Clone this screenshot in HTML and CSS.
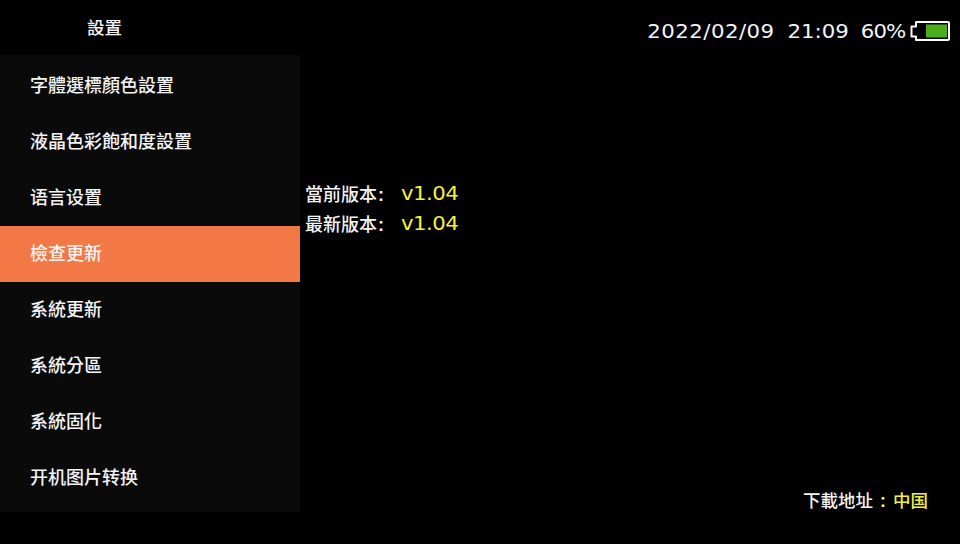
FILE: index.html
```html
<!DOCTYPE html>
<html lang="zh-Hant">
<head>
    <meta charset="UTF-8">
    <meta name="viewport" content="width=device-width, initial-scale=1.0">
    <title>設置</title>
    <link rel="stylesheet" href="styles.css">
</head>
<body>
    <div class="screen">
        <aside class="side">
            <h1 class="side-title">設置</h1>
            <ul class="menu">
                <li class="menu-item">字體選標顏色設置</li>
                <li class="menu-item">液晶色彩飽和度設置</li>
                <li class="menu-item" lang="zh-Hans">语言设置</li>
                <li class="menu-item active">檢查更新</li>
                <li class="menu-item">系統更新</li>
                <li class="menu-item">系統分區</li>
                <li class="menu-item">系統固化</li>
                <li class="menu-item" lang="zh-Hans">开机图片转换</li>
            </ul>
        </aside>

        <main class="content">
            <div class="status">
                <div class="status-text">
                    <span class="status-date">2022/02/09</span>
                    <span class="status-time">21:09</span>
                    <span class="status-pct">60%</span>
                </div>
                <svg class="battery" width="40" height="21" viewBox="0 0 40 21">
                    <path d="M6 1H38a1 1 0 0 1 1 1V18a1 1 0 0 1-1 1H6V15.5H1.5V5.5H6Z" fill="none" stroke="#fff" stroke-width="2" stroke-linejoin="round"/>
                    <rect x="16" y="3.5" width="21" height="13" fill="#4cae1c"/>
                </svg>
            </div>

            <div class="version">
                <div class="version-row"><span class="version-label">當前版本<span class="colon">:</span></span><span class="version-num">v1.04</span></div>
                <div class="version-row"><span class="version-label">最新版本<span class="colon">:</span></span><span class="version-num">v1.04</span></div>
            </div>

            <div class="download">下載地址<span class="download-colon">:</span><span class="download-place">中国</span></div>
        </main>
    </div>
</body>
</html>
```

FILE: styles.css
```css
/* General */
body {
    margin: 0;
    background-color: #000;
    color: #f4f4f4;
    font-family: "Liberation Sans", "Noto Sans CJK TC", sans-serif;
}

.screen {
    display: flex;
    width: 960px;
    height: 544px;
    overflow: hidden;
}

/* Sidebar */
.side {
    width: 300px;
    flex-shrink: 0;
}

.side-title {
    height: 55px;
    margin: 0;
    padding-left: 87px;
    font-size: 17.5px;
    font-weight: 500;
    line-height: 57px;
}

.menu {
    margin: 0;
    padding: 3px 0 6px;
    list-style: none;
    background-color: #0a0a0a;
}

.menu-item {
    height: 56px;
    padding-left: 30px;
    font-size: 18px;
    font-weight: 500;
    line-height: 57px;
}

.menu-item.active {
    background-color: #f27845;
}

/* Right part */
.content {
    flex: 1;
    display: flex;
    flex-direction: column;
}

.status {
    display: flex;
    justify-content: flex-end;
    align-items: center;
    height: 21px;
    margin-top: 21px;
    padding-right: 10px;
}

/* the clock font on the device is wider than anything installed */
.status-text {
    display: flex;
    gap: 11.6px;
    margin-right: 5px;
    margin-bottom: 2px;
    font-family: "DejaVu Sans", sans-serif;
    font-size: 19px;
    transform: scaleX(1.12);
    transform-origin: right center;
}

.status-date {
    letter-spacing: 0.4px;
}

.status-pct {
    margin-left: -0.9px;
    letter-spacing: -0.8px;
}

.version {
    margin-top: 136px;
    padding-left: 5px;
}

.version-row {
    display: flex;
    align-items: center;
    height: 30px;
}

.version-label {
    width: 96px;
    font-size: 18px;
    font-weight: 500;
}

.colon {
    margin-left: 1px;
    font-weight: bold;
}

.version-num {
    color: #f5f03c;
    font-family: "DejaVu Sans", sans-serif;
    font-size: 19px;
    letter-spacing: -0.5px;
    transform: scaleX(1.12);
    transform-origin: left center;
}

.download {
    margin-top: auto;
    margin-bottom: 32px;
    padding-right: 32px;
    font-size: 17.5px;
    font-weight: 500;
    text-align: right;
}

.download-colon {
    display: inline-block;
    width: 20px;
    color: #f8f4a0;
    font-weight: bold;
    text-align: center;
}

.download-place {
    color: #f5f03c;
}
```
